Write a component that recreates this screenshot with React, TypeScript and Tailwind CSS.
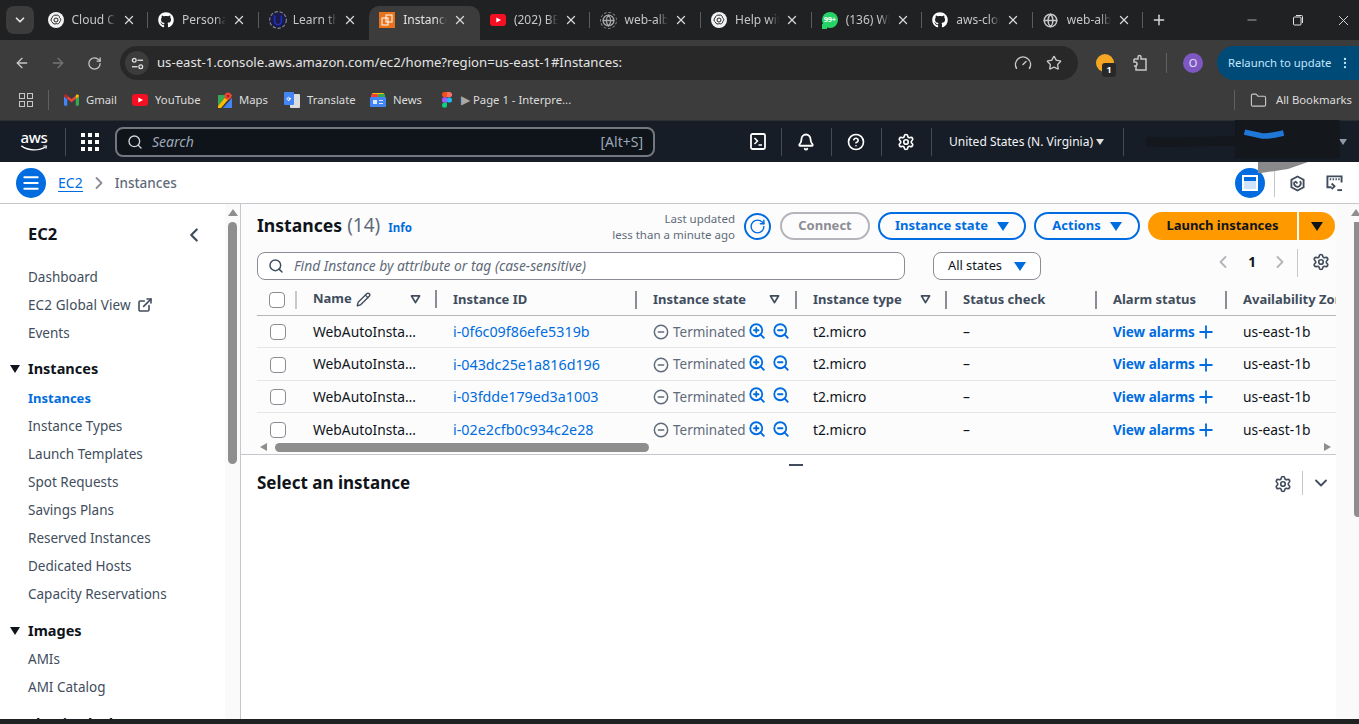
import React from "react";
import {
  ArrowLeft, ArrowRight, RotateCw, Star, X, Plus, Minus, ChevronDown, ChevronLeft, ChevronRight, Search, Bell, Settings,
  CircleHelp, Pencil, Folder, Gauge, ZoomIn, ZoomOut, CircleMinus, Menu, EllipsisVertical, Globe, ExternalLink,
} from "lucide-react";
import { FaGithub } from "react-icons/fa";

const Yt = ({ c = "w-4 h-3" }: { c?: string }) => (
  <svg viewBox="0 0 16 12" className={c}><rect width="16" height="12" rx="3" fill="#f40f23" /><path d="M6.3 3.4 11 6l-4.7 2.6z" fill="#fff" /></svg>
);
const Openai = () => (
  <svg viewBox="0 0 16 16" className="w-4 h-4"><circle cx="8" cy="8" r="8" fill="#f2f2f2" /><g fill="none" stroke="#222" strokeWidth="1"><circle cx="8" cy="8" r="2" /><path d="M8 3.2c2-.6 3.6.8 3.4 2.4 1.6.8 1.8 3 .4 4-.1 1.8-2.1 2.8-3.6 2-1.4 1-3.5.2-3.9-1.6-1.6-.8-1.7-3-.3-4C4.200 4.200 6.300 2.700 8 3.200z" /></g></svg>
);
const Udemy = () => (
  <svg viewBox="0 0 16 16" className="w-[18px] h-[18px]"><circle cx="8" cy="8" r="7.400" fill="#1b1b4a" stroke="#888" strokeWidth="1" strokeDasharray="3 1.500" /><path d="M5 4v5a3 3 0 0 0 6 0V4" stroke="#2230c8" strokeWidth="1.400" fill="none" /></svg>
);
const AwsTab = () => (
  <svg viewBox="0 0 16 16" className="w-4 h-4"><rect width="16" height="16" fill="#e8731a" /><g fill="none" stroke="#fff" strokeWidth="1"><rect x="7" y="3" width="6" height="7" /><rect x="3" y="6" width="6" height="7" /></g></svg>
);
const GlobeGrey = () => (
  <div className="w-[17px] h-[17px] rounded-full border border-dashed border-[#8a8a8a] flex items-center justify-center"><Globe size={13} color="#a8a8a8" strokeWidth={2.400} /></div>
);
const Wa = () => (
  <div className="relative w-4 h-4 rounded-full bg-[#25d366] flex items-center justify-center text-[7.500px] leading-none font-bold text-white tracking-[-0.3px]">
    <div className="absolute left-0 bottom-[-1px] w-[5px] h-[5px] bg-[#25d366]" />
    <span className="relative">99+</span>
  </div>
);

const tabs = [
  { label: "Cloud Computing", icon: <Openai /> },
  { label: "Personal Access", icon: <FaGithub size={16} color="#fff" /> },
  { label: "Learn the Basics", icon: <Udemy /> },
  { label: "Instances | EC2", icon: <AwsTab />, active: true },
  { label: "(202) BEST", icon: <Yt /> },
  { label: "web-alb-demo", icon: <GlobeGrey /> },
  { label: "Help with AWS", icon: <Openai /> },
  { label: "(136) WhatsApp", icon: <Wa /> },
  { label: "aws-cloud-repo", icon: <FaGithub size={16} color="#fff" /> },
  { label: "web-alb-demo", icon: <Globe size={15} color="#c7c7c7" strokeWidth={2.400} /> },
];

const Gmail = () => (
  <svg viewBox="0 0 16 12" className="w-[15px] h-[12px]"><path d="M0 2v9a1 1 0 0 0 1 1h2.500V5z" fill="#4285f4" /><path d="M16 2v9a1 1 0 0 1-1 1h-2.500V5z" fill="#34a853" /><path d="M3.500 5v-3.500L8 5l4.500-3.500V5L8 8.500z" fill="#ea4335" /><path d="M0 2c0-1.600 1.700-2.400 3-1.500l.5 1V5z" fill="#c5221f" /><path d="M16 2c0-1.600-1.700-2.400-3-1.500l-.5 1V5z" fill="#fbbc04" /></svg>
);
const Maps = () => (
  <svg viewBox="0 0 14 16" className="w-[14px] h-[16px]"><path d="M0 3h9L0 14z" fill="#34a853" /><path d="M0 14 9 3h5L3 16H0z" fill="#fbbc04" /><path d="M5 16 14 6v10z" fill="#4285f4" /><circle cx="10" cy="4" r="3.500" fill="#ea4335" /><circle cx="10" cy="4" r="1.200" fill="#a51c14" /></svg>
);
const Translate = () => (
  <svg viewBox="0 0 16 16" className="w-4 h-4"><rect x="6" y="2" width="10" height="14" rx="1" fill="#dadce0" /><rect x="0" y="0" width="10" height="13" rx="1" fill="#4285f4" /><path d="M7 6.500H5v1h1a1.500 1.500 0 1 1-.4-1.700" stroke="#fff" fill="none" strokeWidth="1" /></svg>
);
const News = () => (
  <svg viewBox="0 0 16 14" className="w-4 h-[14px]"><rect x="2" y="0" width="12" height="5" rx="1" fill="#fbbc04" /><rect x="1" y="1" width="7" height="5" rx="1" fill="#ea4335" /><rect x="8" y="1" width="7" height="5" rx="1" fill="#34a853" /><rect x="0" y="4" width="16" height="10" rx="1" fill="#4285f4" /><rect x="3" y="7" width="4" height="4" fill="#dbe8fd" /><rect x="9" y="7" width="4" height="1" fill="#dbe8fd" /><rect x="9" y="10" width="4" height="1" fill="#dbe8fd" /></svg>
);
const Figma = () => (
  <svg viewBox="0 0 10 16" className="w-[10px] h-4"><path d="M0 2.600A2.600 2.600 0 0 1 2.600 0H5v5.300H2.600A2.600 2.600 0 0 1 0 2.600z" fill="#f24e1e" /><path d="M5 0h2.400a2.600 2.600 0 0 1 0 5.300H5z" fill="#ff7262" /><path d="M0 8a2.600 2.600 0 0 1 2.600-2.700H5v5.300H2.600A2.600 2.600 0 0 1 0 8z" fill="#a259ff" /><circle cx="7.400" cy="8" r="2.600" fill="#1abcfe" /><path d="M0 13.300a2.600 2.600 0 0 1 2.600-2.700H5v2.700a2.500 2.500 0 0 1-5 0z" fill="#0acf83" /></svg>
);

const marks = [
  { icon: <Gmail />, label: "Gmail", w: "w-[68px]" },
  { icon: <Yt />, label: "YouTube", w: "w-[86px]" },
  { icon: <Maps />, label: "Maps", w: "w-[66px]" },
  { icon: <Translate />, label: "Translate", w: "w-[86px]" },
  { icon: <News />, label: "News", w: "w-[70px]" },
];

const navItem = "text-[13.500px] leading-[28px] text-[#414d5c] h-[28px]";

const rows = ["i-0f6c09f86efe5319b", "i-043dc25e1a816d196", "i-03fdde179ed3a1003", "i-02e2cfb0c934c2e28"];

const Caret = ({ c = "border-t-[#006ce0]" }: { c?: string }) => (
  <span className={`block shrink-0 w-0 h-0 border-l-[6px] border-r-[6px] border-t-[9px] border-l-transparent border-r-transparent ${c}`} />
);
const Filter = () => (
  <svg viewBox="0 0 12 10" className="w-[11px] h-[9px]"><path d="M1.500 1h9L6 8.500z" fill="none" stroke="#414d5c" strokeWidth="2" strokeLinejoin="round" /></svg>
);
const Sep = () => <div className="w-[2px] h-[18px] bg-[#8c8c94]" />;
const HSep = () => <div className="w-px h-[28px] bg-[#444b54]" />;
const Box = () => <div className="w-4 h-4 rounded-[4px] border border-[#8c8c94] bg-white shrink-0" />;

const navCaret = "border-t-[#0f141a] !border-l-[5px] !border-r-[5px] !border-t-[8px]";

export default function App() {
  return (
    <div className="relative w-[1359px] h-[724px] overflow-hidden flex flex-col bg-white font-['Noto_Sans',sans-serif]">
      {/* Tab strip */}
      <div className="h-[40px] bg-[#1f2122] flex items-stretch shrink-0 relative">
        <div className="w-[37.500px] shrink-0 pl-[6px] pt-[6px]">
          <div className="w-[28px] h-[28px] rounded-[8px] bg-[#3c3c3c] flex items-center justify-center"><ChevronDown size={14} color="#e3e3e3" strokeWidth={3} /></div>
        </div>
        {tabs.map((t, i) => (
          <div key={i} className={`w-[110.600px] shrink-0 h-[34px] mt-[6px] pb-[6px] flex items-center relative ${t.active ? "bg-[#3c3c3c] rounded-t-[10px]" : ""}`}>
            <div className="w-[34px] pl-[10px] shrink-0 flex items-center">{t.icon}</div>
            <div className={`w-[44px] overflow-hidden whitespace-nowrap text-[12px] [mask-image:linear-gradient(90deg,#000_75%,transparent)] ${t.active ? "text-[#e3e3e3]" : "text-[#c7c7c7]"}`}>{t.label}</div>
            <div className="w-[26px] flex justify-center"><X size={14} color="#d8d8d8" strokeWidth={2.200} /></div>
            {i !== 2 && i !== 3 ? <div className="absolute right-0 top-[6px] w-px h-[16px] bg-[#5a5c5e]" /> : null}
          </div>
        ))}
        <div className="ml-[8px] mt-[12px]"><Plus size={16} color="#d8d8d8" strokeWidth={2.200} /></div>
        <div className="flex-1" />
        <div className="flex items-center">
          <div className="w-[34px] flex justify-center"><Minus size={14} color="#e3e3e3" strokeWidth={1.200} /></div>
          <div className="w-[58px] flex justify-center">
            <svg viewBox="0 0 12 12" className="w-[12px] h-[12px]" fill="none" stroke="#e3e3e3" strokeWidth="1"><rect x="1.500" y="3" width="7.500" height="8" rx="1" /><path d="M4 1.500h5.500a1 1 0 0 1 1 1V9" /></svg>
          </div>
          <div className="w-[32px] flex justify-center"><X size={17} color="#e3e3e3" strokeWidth={1.300} /></div>
        </div>
      </div>

      {/* Toolbar */}
      <div className="h-[42px] bg-[#3c3c3c] flex items-center shrink-0 pt-[4px]">
        <div className="w-[44px] flex justify-center"><ArrowLeft size={16} color="#c7c7c7" strokeWidth={2} /></div>
        <div className="w-[28px] flex justify-center"><ArrowRight size={16} color="#757575" strokeWidth={2} /></div>
        <div className="w-[46px] flex justify-center -ml-[1px]"><RotateCw size={15} color="#c7c7c7" strokeWidth={2} /></div>
        <div className="w-[958px] h-[34px] rounded-full bg-[#282828] flex items-center shrink-0 ml-[3px]">
          <div className="ml-[5px] w-[24px] h-[24px] rounded-full bg-[#3c3c3c] flex items-center justify-center">
            <svg viewBox="0 0 14 14" className="w-[13px] h-[13px]" fill="none" stroke="#e3e3e3" strokeWidth="1.400"><circle cx="3.500" cy="3.500" r="2" /><path d="M7 3.500h6" /><circle cx="10.500" cy="10.500" r="2" /><path d="M1 10.500h6" /></svg>
          </div>
          <div className="ml-[8px] text-[13.150px] text-[#e3e3e3] whitespace-nowrap">us-east-1.console.aws.amazon.com/ec2/home?region=us-east-1#Instances:</div>
          <div className="flex-1" />
          <Gauge size={18} color="#c7c7c7" strokeWidth={2} />
          <div className="w-[14px]" />
          <Star size={16} color="#c7c7c7" strokeWidth={2} />
          <div className="w-[16px]" />
        </div>
        <div className="w-[18px]" />
        <div className="relative w-[18px] h-[18px] rounded-full bg-[#f5a623]">
          <div className="absolute left-[6px] top-[9px] w-[14px] h-[14px] rounded-[3px] bg-[#282828] text-[9px] font-bold text-white flex items-center justify-center">1</div>
        </div>
        <div className="ml-[18px] w-[18px] flex justify-center">
          <svg viewBox="0 0 16 18" className="w-[16px] h-[18px]" fill="none" stroke="#c7c7c7" strokeWidth="1.500"><path d="M1 5h4V3a1.500 1.500 0 0 1 3 0v2h5v11H3v-4" /><path d="M1 5v3h1a2 2 0 0 1 0 4H1" /></svg>
        </div>
        <div className="ml-[16px] w-px h-[20px] bg-[#5f6062]" />
        <div className="ml-[16px] w-[20px] h-[20px] rounded-full bg-[#7e57c2] text-[11px] text-[#e6e0f5] flex items-center justify-center">O</div>
        <div className="ml-[14px] flex-1 h-[34px] rounded-l-full bg-[#004a77] flex items-center pl-[11px] text-[11.300px] text-[#c2e7ff] whitespace-nowrap">
          Relaunch to update
          <EllipsisVertical size={14} color="#c2e7ff" className="ml-[7px]" />
        </div>
      </div>

      {/* Bookmarks */}
      <div className="h-[38px] bg-[#3c3c3c] flex items-center shrink-0 text-[11.300px] text-[#dcdcdc] pb-[2px]">
        <div className="ml-[19px] grid grid-cols-2 gap-[2px]">
          <div className="w-[6px] h-[6px] border border-[#c7c7c7]" /><div className="w-[6px] h-[6px] border border-[#c7c7c7]" />
          <div className="w-[6px] h-[6px] border border-[#c7c7c7]" /><div className="w-[6px] h-[6px] border border-[#c7c7c7]" />
        </div>
        <div className="ml-[15px] w-px h-[20px] bg-[#5f6062]" />
        <div className="w-[15px]" />
        {marks.map((m) => (
          <div key={m.label} className={`${m.w} flex items-center gap-[7px] shrink-0`}>{m.icon}<span>{m.label}</span></div>
        ))}
        <div className="ml-[2px]"><Figma /></div>
        <span className="ml-[9px] text-[12px] text-[#a8a8a8]">▶</span>
        <span className="ml-[3px]">Page 1 - Interpre...</span>
        <div className="flex-1" />
        <div className="w-px h-[20px] bg-[#5f6062]" />
        <Folder size={17} color="#c7c7c7" strokeWidth={1.600} className="ml-[15px]" />
        <span className="ml-[9px] mr-[7px]">All Bookmarks</span>
      </div>

      {/* AWS header */}
      <div className="h-[42px] bg-[#161d26] border-t border-[#2a2f33] flex items-center shrink-0 relative">
        <div className="ml-[17px] w-[34px] flex flex-col items-center text-white">
          <span className="text-[15px] leading-[13px] font-medium tracking-[-0.3px]">aws</span>
          <svg viewBox="0 0 32 8" className="w-[31px] h-[7px] mt-[1px]" fill="none" stroke="#fff" strokeWidth="1.500"><path d="M1 1c8 6 20 6 28 1" /><path d="M26 1h4l-1 3.500" strokeWidth="1" /></svg>
        </div>
        <div className="ml-[14px] w-px h-[28px] bg-[#444b54]" />
        <div className="ml-[15px] grid grid-cols-3 gap-[3px]">
          {Array.from({ length: 9 }).map((_, i) => <div key={i} className="w-[4px] h-[4px] bg-white" />)}
        </div>
        <div className="ml-[16px] w-[540px] h-[30px] rounded-[8px] border-2 border-[#72787f] bg-[#0f141a] flex items-center px-[10px] text-[14px] text-[#9ba7b6]">
          <Search size={16} color="#d1d5db" strokeWidth={2} />
          <span className="ml-[9px] italic">Search</span>
          <div className="flex-1" />
          <span>[Alt+S]</span>
        </div>
        <div className="w-[95px]" />
        <svg viewBox="0 0 16 17" className="w-[16px] h-[17px]" fill="none" stroke="#fff" strokeWidth="1.800"><rect x="1" y="1" width="14" height="15" rx="1.500" /><path d="M4.500 5 7.500 8l-3 3M8.500 12h3.500" strokeWidth="1.500" /></svg>
        <div className="w-[15px]" /><HSep /><div className="w-[15px]" />
        <Bell size={18} color="#fff" strokeWidth={2.400} />
        <div className="w-[16px]" /><HSep /><div className="w-[15px]" />
        <CircleHelp size={18} color="#fff" strokeWidth={2.200} />
        <div className="w-[16px]" /><HSep /><div className="w-[15px]" />
        <Settings size={18} color="#fff" strokeWidth={2.200} />
        <div className="w-[16px]" /><HSep />
        <span className="ml-[17px] w-[147px] text-[12px] text-[#f3f3f7] whitespace-nowrap">United States (N. Virginia)</span>
        <Caret c="border-t-[#e0e0e0] !border-l-[4px] !border-r-[4px] !border-t-[6px]" />
        <div className="w-[19px]" /><HSep />
        <div className="flex-1" />
        <span className="mr-[12px]"><Caret c="border-t-[#8d99a8] !border-l-[4px] !border-r-[4px] !border-t-[6px]" /></span>
        <svg viewBox="0 0 225 44" className="absolute left-[1125px] top-[-1px] w-[225px] h-[41px] pointer-events-none">
          <rect x="110" y="0" width="112" height="41" fill="#14171b" />
          <path d="M15 23c30 3 70-2 95 0s60 2 100-1" stroke="#14171b" strokeWidth="10" fill="none" />
          <path d="M120 13l18 4c8 1 15-1 24-3" stroke="#1f77d8" strokeWidth="6" fill="none" />
        </svg>
      </div>

      {/* Breadcrumb */}
      <div className="h-[42px] border-b border-[#c6c6cd] flex items-center shrink-0 relative pt-[1px]">
        <div className="ml-[16px] w-[30px] h-[30px] rounded-full bg-[#006ce0] flex items-center justify-center"><Menu size={20} color="#fff" strokeWidth={2.400} /></div>
        <span className="ml-[12px] text-[14px] text-[#006ce0] border-b border-[#006ce0] leading-[17px]">EC2</span>
        <ChevronRight size={20} color="#8c8c94" strokeWidth={2.200} className="ml-[6px]" />
        <span className="ml-[6px] text-[13.500px] font-medium text-[#5f6b7a]">Instances</span>
        <div className="flex-1" />
        <div className="w-[30px] h-[30px] rounded-full bg-[#006ce0] flex items-center justify-center">
          <div className="w-[16px] h-[16px] border-2 border-white flex flex-col"><div className="h-[4px] bg-[#006ce0]" /><div className="flex-1 bg-[#cfe3fb]" /></div>
        </div>
        <div className="ml-[9px] w-px h-[28px] bg-[#c6c6cd]" />
        <svg viewBox="0 0 16 18" className="ml-[15px] w-[15px] h-[17px]" fill="none" stroke="#414d5c" strokeWidth="2"><path d="M8 1.500 14.500 5v8L8 16.500 1.500 13V5z" /><path d="M8 9 5.500 6.500M10.500 6.500A3.500 3.500 0 1 1 5 7" strokeWidth="1.800" /></svg>
        <svg viewBox="0 0 18 18" className="ml-[21px] w-[17px] h-[17px] mr-[16px]" fill="none" stroke="#414d5c" strokeWidth="2"><path d="M6 13H1.500V1.500h15V8" /><path d="M4 4.500h1.500M7 4.500h1.500M10 4.500h1.500M13 4.500h1.500" /><path d="M6 9l3 3-3 3" /><path d="M12 16h5" /></svg>
      </div>

      {/* Body */}
      <div className="flex-1 flex min-h-0">
        {/* Sidebar */}
        <div className="w-[241px] shrink-0 flex border-r border-[#c6c6cd] overflow-hidden">
          <div className="w-[225px] shrink-0 pl-[28px]">
            <div className="h-[58px] flex items-center justify-between pr-[20px] pt-[3px]">
              <span className="text-[16.500px] font-bold text-[#0f141a]">EC2</span>
              <ChevronLeft size={22} color="#414d5c" strokeWidth={2.400} />
            </div>
            <div className="pt-[1px]">
              <div className={navItem}>Dashboard</div>
              <div className={`${navItem} flex items-center gap-[6px]`}><span className="tracking-[0.1px]">EC2 Global View</span><ExternalLink size={16} color="#414d5c" strokeWidth={2.400} /></div>
              <div className={navItem}>Events</div>
            </div>
            <div className="relative mt-[7px] h-[30px] flex items-center text-[14.500px] font-bold text-[#0f141a]">
              <span className="absolute left-[-18px] top-[11px]"><Caret c={navCaret} /></span>
              Instances
            </div>
            <div className={`${navItem} !text-[13px] font-bold !text-[#006ce0]`}>Instances</div>
            {["Instance Types", "Launch Templates", "Spot Requests", "Savings Plans", "Reserved Instances", "Dedicated Hosts", "Capacity Reservations"].map((n) => <div key={n} className={navItem}>{n}</div>)}
            <div className="relative mt-[9px] h-[28px] flex items-center text-[14.500px] font-bold text-[#0f141a]">
              <span className="absolute left-[-18px] top-[10px]"><Caret c={navCaret} /></span>
              Images
            </div>
            <div className={navItem}>AMIs</div>
            <div className={navItem}>AMI Catalog</div>
            <div className="relative mt-[9px] h-[28px] flex items-center text-[14.500px] font-bold text-[#0f141a] whitespace-nowrap">
              <span className="absolute left-[-18px] top-[10px]"><Caret c={navCaret} /></span>
              Elastic Block Store
            </div>
          </div>
          <div className="w-[15px] bg-[#fafafa] flex flex-col items-center pt-[5px]">
            <div className="w-0 h-0 border-x-[5px] border-b-[7px] border-x-transparent border-b-[#8e8e8e]" />
            <div className="mt-[6px] w-[9px] h-[242px] rounded-full bg-[#8e8e8e]" />
          </div>
        </div>

        {/* Main */}
        <div className="flex-1 min-w-0 flex">
          <div className="w-[1095px] shrink-0 flex flex-col">
            <div className="h-[251px] bg-[#fcfcfc] border-b border-[#c6c6cd] pl-[16px] flex flex-col shrink-0 overflow-hidden">
              <div className="h-[44px] flex items-center shrink-0 pr-[1px]">
                <span className="text-[17.600px] font-bold text-[#0f141a] -mt-[2px]">Instances</span>
                <span className="ml-[5px] text-[19px] text-[#5f6b7a] -mt-[2px]">(14)</span>
                <span className="ml-[8px] text-[11.500px] font-bold text-[#006ce0] pt-[3px]">Info</span>
                <div className="flex-1" />
                <div className="text-[11.500px] leading-[16px] text-[#5f6b7a] text-right pt-[2px]">Last updated<br />less than a minute ago</div>
                <div className="ml-[9px] w-[27px] h-[27px] rounded-full border-2 border-[#006ce0] flex items-center justify-center"><RotateCw size={17} color="#006ce0" strokeWidth={2} /></div>
                <div className="ml-[9px] w-[90px] h-[28px] rounded-full border-2 border-[#b4b4bb] flex items-center justify-center text-[13px] font-bold text-[#8c8c94]">Connect</div>
                <div className="ml-[8px] w-[148px] h-[28px] rounded-full border-2 border-[#006ce0] flex items-center justify-center gap-[9px] text-[13px] font-bold text-[#006ce0]">Instance state <Caret /></div>
                <div className="ml-[8px] w-[106px] h-[28px] rounded-full border-2 border-[#006ce0] flex items-center justify-center gap-[9px] text-[13px] font-bold text-[#006ce0]">Actions <Caret /></div>
                <div className="ml-[8px] w-[149px] h-[28px] rounded-l-full bg-[#ff9900] flex items-center justify-center text-[13px] font-bold text-[#0f141a]">Launch instances</div>
                <div className="ml-[2px] w-[36px] h-[28px] rounded-r-full bg-[#ff9900] flex items-center justify-center"><Caret c="border-t-[#0f141a]" /></div>
              </div>
              <div className="h-[36px] flex items-center shrink-0">
                <div className="w-[648px] h-[28px] rounded-[8px] border border-[#8c8c94] bg-white flex items-center pl-[10px] text-[13.800px] italic text-[#5f6b7a]">
                  <Search size={16} color="#414d5c" strokeWidth={2.200} />
                  <span className="ml-[10px]">Find Instance by attribute or tag (case-sensitive)</span>
                </div>
                <div className="ml-[28px] w-[108px] h-[28px] rounded-[8px] border border-[#8c8c94] bg-white flex items-center justify-center gap-[12px] text-[12.800px] text-[#0f141a]">All states <Caret /></div>
                <div className="flex-1" />
                <ChevronLeft size={20} color="#b4b4bb" strokeWidth={2.200} className="-mt-[8px]" />
                <span className="ml-[15px] text-[13.500px] font-bold text-[#0f141a] -mt-[8px]">1</span>
                <ChevronRight size={20} color="#b4b4bb" strokeWidth={2.200} className="ml-[14px] -mt-[8px]" />
                <div className="ml-[7px] w-px h-[28px] bg-[#c6c6cd] -mt-[6px]" />
                <Settings size={18} color="#414d5c" strokeWidth={2.200} className="ml-[14px] -mt-[8px]" />
                <div className="w-[6px] shrink-0" />
              </div>
              {/* Table */}
              <div className="w-[1079px] overflow-hidden flex flex-col">
                <div className="h-[32px] flex items-center border-b border-[#b4b4bb] text-[13px] font-bold text-[#414d5c] whitespace-nowrap shrink-0">
                  <div className="w-[40px] flex items-center justify-end shrink-0"><div className="mr-[10px]"><Box /></div><div className="w-[2px] h-[18px] bg-[#c6c6cd]" /></div>
                  <div className="w-[140px] shrink-0 flex items-center pl-[16px] -mt-[1px]">Name <Pencil size={15} color="#414d5c" strokeWidth={2.200} className="ml-[4px]" /><div className="flex-1" /><Filter /><div className="w-[14px]" /><Sep /></div>
                  <div className="w-[200px] shrink-0 flex items-center pl-[16px]">Instance ID<div className="flex-1" /><Sep /></div>
                  <div className="w-[160px] shrink-0 flex items-center pl-[16px]">Instance state<div className="flex-1" /><Filter /><div className="w-[15px]" /><Sep /></div>
                  <div className="w-[150px] shrink-0 flex items-center pl-[16px]">Instance type<div className="flex-1" /><Filter /><div className="w-[14px]" /><Sep /></div>
                  <div className="w-[150px] shrink-0 flex items-center pl-[16px]">Status check<div className="flex-1" /><Sep /></div>
                  <div className="w-[130px] shrink-0 flex items-center pl-[16px]">Alarm status<div className="flex-1" /><Sep /></div>
                  <div className="w-[109px] shrink-0 pl-[16px] overflow-hidden">Availability Zone</div>
                </div>
                {rows.map((id, i) => (
                  <div key={id} className={`flex items-center text-[13.800px] text-[#0f141a] whitespace-nowrap shrink-0 ${i < 3 ? "h-[32.400px] pt-[1px] border-b border-[#e6e6ea]" : "h-[28px] pt-[6px]"}`}>
                    <div className="w-[40px] shrink-0 pl-[13px]"><Box /></div>
                    <div className="w-[140px] shrink-0 pl-[16px]">WebAutoInsta…</div>
                    <div className="w-[200px] shrink-0 pl-[16px] text-[14.300px] text-[#006ce0]">{id}</div>
                    <div className="w-[160px] shrink-0 pl-[16px] flex items-center text-[13.500px] text-[#5f6b7a]">
                      <CircleMinus size={16} color="#5f6b7a" strokeWidth={2.200} />
                      <span className="ml-[4px]">Terminated</span>
                      <ZoomIn size={18} color="#006ce0" strokeWidth={2.400} className="ml-[2px] -mt-[3px] shrink-0" />
                      <ZoomOut size={18} color="#006ce0" strokeWidth={2.400} className="ml-[6px] -mt-[3px] shrink-0" />
                    </div>
                    <div className="w-[150px] shrink-0 pl-[16px]">t2.micro</div>
                    <div className="w-[150px] shrink-0 pl-[16px]">–</div>
                    <div className="w-[130px] shrink-0 pl-[16px] flex items-center text-[13.500px] font-bold text-[#006ce0]">View alarms <Plus size={20} color="#006ce0" strokeWidth={2.200} className="ml-[1px]" /></div>
                    <div className="w-[109px] shrink-0 pl-[16px]">us-east-1b</div>
                  </div>
                ))}
                <div className="h-[10px] flex items-center shrink-0 mt-[1px]">
                  <div className="w-[18px] pl-[3px]"><div className="w-0 h-0 border-y-[4px] border-r-[7px] border-y-transparent border-r-[#8e8e8e]" /></div>
                  <div className="w-[374px] h-[9px] rounded-full bg-[#8e8e8e]" />
                  <div className="flex-1" />
                  <div className="w-0 h-0 border-y-[4px] border-l-[7px] border-y-transparent border-l-[#8e8e8e] mr-[5px]" />
                </div>
              </div>
            </div>
            <div className="flex justify-center h-[10px] pl-[14px] shrink-0"><div className="w-[14px] h-[2px] bg-[#414d5c] mt-[9px]" /></div>
            <div className="h-[36px] flex items-center pl-[16px] pr-[5px] shrink-0">
              <span className="text-[17px] font-bold text-[#0f141a]">Select an instance</span>
              <div className="flex-1" />
              <Settings size={18} color="#414d5c" strokeWidth={2.200} className="mt-[1px]" />
              <div className="ml-[10px] w-px h-[24px] bg-[#c6c6cd]" />
              <ChevronDown size={20} color="#414d5c" strokeWidth={2.200} className="ml-[8px]" />
            </div>
          </div>
          <div className="flex-1 bg-[#fafafa] flex flex-col items-end pt-[5px]">
            <div className="w-0 h-0 mr-[-2px] border-x-[5px] border-b-[7px] border-x-transparent border-b-[#8e8e8e]" />
            <div className="mt-[6px] w-[5px] h-[295px] bg-[#8e8e8e] rounded-bl-[4px]" />
          </div>
        </div>
      </div>
      <div className="h-[5px] bg-[#1f2122] shrink-0" />
      <svg viewBox="0 0 50 12" className="absolute left-[1258px] top-[162px] w-[50px] h-[12px]"><path d="M0 0h50L30 7 3 11H0z" fill="#8a8a8a" /></svg>
    </div>
  );
}
